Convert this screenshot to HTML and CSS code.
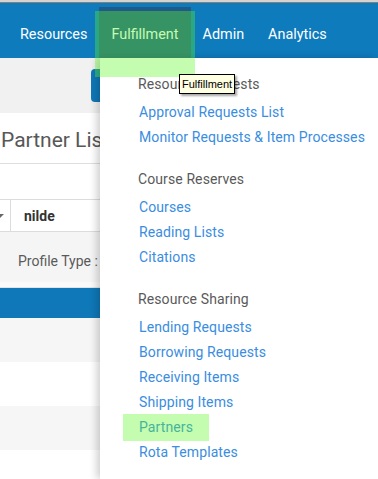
FILE: index.html
```html
<!DOCTYPE html>
<html>
<head>
<meta charset="utf-8">
<link rel="stylesheet" href="styles.css">
</head>
<body>
<div class="chrome-top"></div>
<header class="nav">
  <a class="nav-item">Resources</a>
  <a class="nav-item active">Fulfillment</a>
  <a class="nav-item">Admin</a>
  <a class="nav-item">Analytics</a>
</header>
<main class="page">
  <div class="toolbar"><span class="btn"></span></div>
  <h1 class="title">Partner List</h1>
  <div class="spacer"></div>
  <div class="filter">
    <span class="select"><span class="caret"></span></span>
    <span class="filter-value">nilde</span>
  </div>
  <div class="facets">Profile Type :</div>
  <div class="table">
    <div class="thead"></div>
    <div class="row"></div>
    <div class="row"></div>
    <div class="row"></div>
    <div class="row"></div>
  </div>
</main>
<nav class="menu">
  <section class="group">
    <h2 class="group-title">Resource Requests</h2>
    <a class="link">Approval Requests List</a>
    <a class="link">Monitor Requests &amp; Item Processes</a>
  </section>
  <section class="group">
    <h2 class="group-title">Course Reserves</h2>
    <a class="link">Courses</a>
    <a class="link">Reading Lists</a>
    <a class="link">Citations</a>
  </section>
  <section class="group">
    <h2 class="group-title">Resource Sharing</h2>
    <a class="link">Lending Requests</a>
    <a class="link">Borrowing Requests</a>
    <a class="link">Receiving Items</a>
    <a class="link">Shipping Items</a>
    <a class="link marked">Partners</a>
    <a class="link">Rota Templates</a>
  </section>
</nav>
<div class="hl hl-tab"></div>
<div class="tooltip">Fulfillment</div>
</body>
</html>
```
FILE: styles.css
```css
html, body {
  margin: 0;
  padding: 0;
}
body {
  width: 378px;
  height: 479px;
  overflow: hidden;
  position: relative;
  font-family: Roboto, "Liberation Sans", sans-serif;
  font-size: 14px;
  background: #fff;
}
.chrome-top {
  height: 2px;
  background: #d6d3ce;
  border-bottom: 1px solid #7f7f7f;
}
.nav {
  height: 55px;
  box-sizing: border-box;
  background: #0e7bbd;
  padding: 4px 0 0 8px;
  display: flex;
}
.nav-item {
  display: block;
  height: 51px;
  line-height: 55px;
  padding: 0 12px;
  color: #fff;
  font-size: 14.4px;
  white-space: nowrap;
  overflow: hidden;
}
.nav-item.active {
  background: #1f5a88;
}

/* page behind the menu */
.page {
  display: flex;
  flex-direction: column;
}
.toolbar {
  height: 55px;
  background: #f1f1f1;
  padding: 11px 0 0 91px;
  box-sizing: border-box;
}
.btn {
  display: block;
  width: 140px;
  height: 33px;
  background: #0f78b8;
  border-radius: 4px;
}
.title {
  margin: 0;
  height: 51px;
  box-sizing: border-box;
  padding: 3px 0 0 1px;
  line-height: 49px;
  font-size: 21px;
  font-weight: 400;
  color: #575757;
  border-bottom: 1px solid #dedede;
  white-space: nowrap;
}
.spacer {
  height: 35px;
}
.filter {
  height: 33px;
  box-sizing: border-box;
  border-top: 1px solid #dcdcdc;
  border-bottom: 1px solid #dcdcdc;
  display: flex;
  align-items: center;
}
.select {
  width: 10px;
  height: 31px;
  border-right: 1px solid #dcdcdc;
  display: flex;
  align-items: center;
  overflow: hidden;
}
.caret {
  display: block;
  width: 0;
  height: 0;
  margin-left: -4px;
  margin-top: 1px;
  border-left: 4px solid transparent;
  border-right: 4px solid transparent;
  border-top: 4px solid #666;
}
.filter-value {
  padding-left: 13px;
  padding-top: 1px;
  font-weight: 700;
  color: #333;
}
.facets {
  height: 50px;
  box-sizing: border-box;
  background: #f5f5f5;
  padding: 18px 0 0 18px;
  line-height: 22px;
  color: #5a5a5a;
  white-space: nowrap;
}
.table {
  border-top: 5px solid #fafafa;
}
.thead {
  height: 30px;
  background: #0f78b8;
  border-top: 1px solid #e2e2e2;
}
.row {
  height: 44px;
  background: #f6f6f6;
}
.row:nth-child(odd) {
  background: #fff;
}

/* dropdown menu */
.menu {
  position: absolute;
  left: 100px;
  top: 58px;
  right: 0;
  bottom: 0;
  background: #fff;
  box-shadow: -3px 0 8px rgba(0, 0, 0, 0.2);
  padding: 14px 0 0 38px;
  box-sizing: border-box;
  z-index: 2;
  letter-spacing: 0.1px;
}
.group + .group {
  margin-top: 17px;
}
.group-title {
  margin: 0 0 3px 0;
  font-size: 14px;
  font-weight: 400;
  line-height: 25px;
  color: #5a5a5a;
}
.link {
  display: block;
  line-height: 25px;
  padding-left: 1px;
  color: #3a8ddf;
  white-space: nowrap;
}
.marked {
  position: relative;
}
.marked::after {
  content: "";
  position: absolute;
  left: -15px;
  top: -1px;
  width: 86px;
  height: 27px;
  background: rgba(93, 246, 38, 0.365);
}

/* annotation highlight over the active tab */
.hl-tab {
  position: absolute;
  left: 95px;
  top: 11px;
  width: 100px;
  height: 66px;
  background: rgba(93, 246, 38, 0.365);
  z-index: 3;
}

/* browser tooltip */
.tooltip {
  position: absolute;
  left: 179px;
  top: 74px;
  height: 18px;
  padding: 0 2px 0 2px;
  border: 1px solid #000;
  background: #ffffe1;
  color: #000;
  font-family: "Liberation Sans", Arial, sans-serif;
  font-size: 11px;
  line-height: 18px;
  box-shadow: 2px 2px 2px rgba(0, 0, 0, 0.35);
  z-index: 4;
}
```
